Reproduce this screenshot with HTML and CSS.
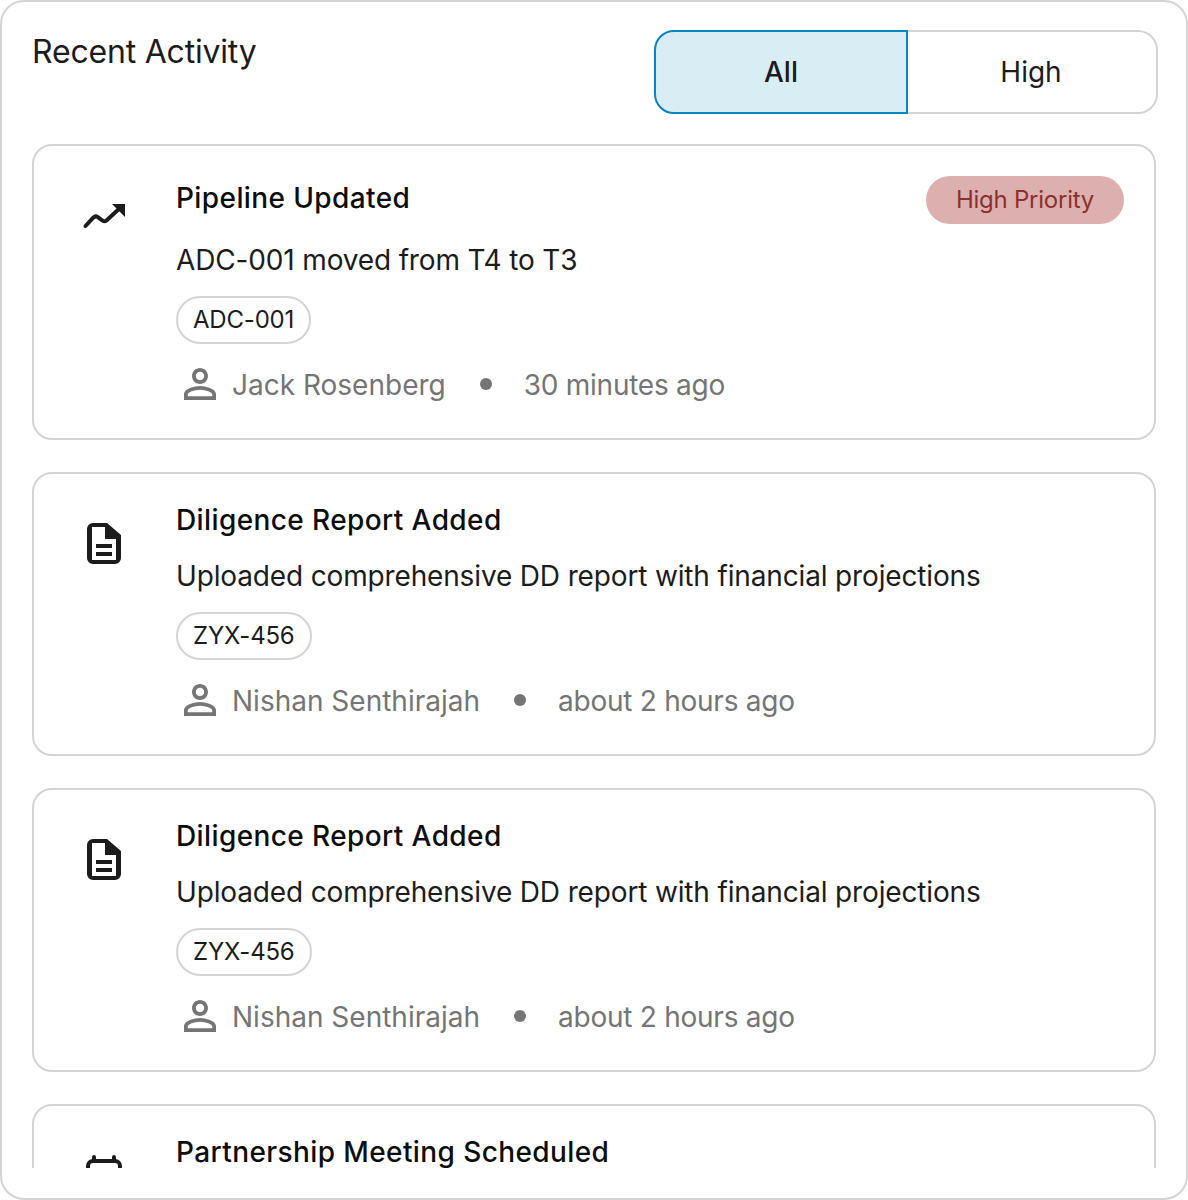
FILE: index.html
```html
<!DOCTYPE html>
<html lang="en">
<head>
  <meta charset="UTF-8">
  <title>Recent Activity</title>
  <link rel="stylesheet" href="styles.css">
</head>
<body>
  <section class="panel">
    <div class="panel-head">
      <h2 class="panel-title">Recent Activity</h2>
      <div class="toggle">
        <button class="toggle-btn active">All</button>
        <button class="toggle-btn">High</button>
      </div>
    </div>

    <div class="list">
      <article class="card">
        <div class="card-icon">
          <svg viewBox="0 0 48 48" width="48" height="48"><path class="line" d="M5.5 34 L13.5 25.5 Q15.5 23.5 17.5 25 L22.5 28.5 Q24.5 30 26.5 28.5 L40 16"/><path d="M32 12 H45 V25 Z"/></svg>
        </div>
        <div class="card-body">
          <div class="card-top">
            <h3 class="card-title">Pipeline Updated</h3>
            <span class="badge">High Priority</span>
          </div>
          <p class="card-desc">ADC-001 moved from T4 to T3</p>
          <span class="tag">ADC-001</span>
          <div class="meta">
            <svg viewBox="0 0 24 24" width="48" height="48"><path d="M12 5.9c1.16 0 2.1.94 2.1 2.1s-.94 2.1-2.1 2.1S9.9 9.16 9.9 8s.94-2.1 2.1-2.1m0 9c2.97 0 6.1 1.46 6.1 2.1v1.1H5.9V17c0-.64 3.13-2.1 6.1-2.1M12 4C9.79 4 8 5.79 8 8s1.79 4 4 4 4-1.79 4-4-1.79-4-4-4zm0 9c-2.67 0-8 1.34-8 4v3h16v-3c0-2.66-5.33-4-8-4z"/></svg>
            <span class="meta-name">Jack Rosenberg</span>
            <span class="meta-dot"></span>
            <span class="meta-time">30 minutes ago</span>
          </div>
        </div>
      </article>

      <article class="card">
        <div class="card-icon">
          <svg viewBox="0 0 48 48" width="48" height="48"><path fill-rule="evenodd" d="M13 3H27L41 15V38A6 6 0 0 1 35 44H13A6 6 0 0 1 7 38V9A6 6 0 0 1 13 3ZM12 7V40H36V19H25V7ZM16 24H32V28H16ZM16 32H32V36H16Z"/></svg>
        </div>
        <div class="card-body">
          <h3 class="card-title">Diligence Report Added</h3>
          <p class="card-desc">Uploaded comprehensive DD report with financial projections</p>
          <span class="tag">ZYX-456</span>
          <div class="meta">
            <svg viewBox="0 0 24 24" width="48" height="48"><path d="M12 5.9c1.16 0 2.1.94 2.1 2.1s-.94 2.1-2.1 2.1S9.9 9.16 9.9 8s.94-2.1 2.1-2.1m0 9c2.97 0 6.1 1.46 6.1 2.1v1.1H5.9V17c0-.64 3.13-2.1 6.1-2.1M12 4C9.79 4 8 5.79 8 8s1.79 4 4 4 4-1.79 4-4-1.79-4-4-4zm0 9c-2.67 0-8 1.34-8 4v3h16v-3c0-2.66-5.33-4-8-4z"/></svg>
            <span class="meta-name">Nishan Senthirajah</span>
            <span class="meta-dot"></span>
            <span class="meta-time">about 2 hours ago</span>
          </div>
        </div>
      </article>

      <article class="card">
        <div class="card-icon">
          <svg viewBox="0 0 48 48" width="48" height="48"><path fill-rule="evenodd" d="M13 3H27L41 15V38A6 6 0 0 1 35 44H13A6 6 0 0 1 7 38V9A6 6 0 0 1 13 3ZM12 7V40H36V19H25V7ZM16 24H32V28H16ZM16 32H32V36H16Z"/></svg>
        </div>
        <div class="card-body">
          <h3 class="card-title">Diligence Report Added</h3>
          <p class="card-desc">Uploaded comprehensive DD report with financial projections</p>
          <span class="tag">ZYX-456</span>
          <div class="meta">
            <svg viewBox="0 0 24 24" width="48" height="48"><path d="M12 5.9c1.16 0 2.1.94 2.1 2.1s-.94 2.1-2.1 2.1S9.9 9.16 9.9 8s.94-2.1 2.1-2.1m0 9c2.97 0 6.1 1.46 6.1 2.1v1.1H5.9V17c0-.64 3.13-2.1 6.1-2.1M12 4C9.79 4 8 5.79 8 8s1.79 4 4 4 4-1.79 4-4-1.79-4-4-4zm0 9c-2.67 0-8 1.34-8 4v3h16v-3c0-2.66-5.33-4-8-4z"/></svg>
            <span class="meta-name">Nishan Senthirajah</span>
            <span class="meta-dot"></span>
            <span class="meta-time">about 2 hours ago</span>
          </div>
        </div>
      </article>

      <article class="card">
        <div class="card-icon">
          <svg viewBox="0 0 48 48" width="48" height="48"><rect class="line" x="8" y="9" width="32" height="34" rx="5"/><path class="line" d="M14 5V9M34 5V9M8 20H40"/></svg>
        </div>
        <div class="card-body">
          <h3 class="card-title">Partnership Meeting Scheduled</h3>
        </div>
      </article>
    </div>
  </section>
</body>
</html>
```

FILE: styles.css
```css
* { box-sizing: border-box; }
body { margin: 0; font-family: Inter, "Liberation Sans", sans-serif; background: #fff; color: #1c1c1c; }

.panel { width: 1188px; height: 1200px; padding: 28px 30px 30px; border: 2px solid #d4d4d4; border-radius: 24px; background: #fff; display: flex; flex-direction: column; gap: 30px; }
.panel-head { display: flex; justify-content: space-between; align-items: flex-start; margin-right: -2px; }
.panel-title { margin: 0; font-size: 32px; line-height: 44px; font-weight: 400; letter-spacing: -0.2px; }

.toggle { display: flex; width: 504px; height: 84px; }
.toggle-btn { flex: 1; padding: 0 2px 0 0; font: 400 28px Inter, sans-serif; color: #1c1c1c; background: #fff; border: 2px solid #d4d4d4; border-left: 0; border-radius: 0 20px 20px 0; }
.toggle-btn.active { flex: none; width: 254px; padding: 0; font-weight: 500; background: #d9edf4; border: 2px solid #0a85bd; border-radius: 20px 0 0 20px; }

.list { flex: 1; min-height: 0; overflow: hidden; display: flex; flex-direction: column; gap: 32px; }
.card { flex: none; display: flex; gap: 32px; padding: 30px; border: 2px solid #d4d4d4; border-radius: 20px; }
.card-icon { flex: none; width: 80px; padding: 16px; }
.card-icon svg { display: block; fill: #1c1c1c; }
.card-icon .line { fill: none; stroke: #1c1c1c; stroke-width: 4; stroke-linecap: round; }
.card-body { flex: 1; display: flex; flex-direction: column; align-items: flex-start; gap: 16px; }
.card-top { width: 100%; display: flex; justify-content: space-between; align-items: center; }
.card-title { margin: 0; padding-bottom: 4px; font-size: 28px; line-height: 32px; font-weight: 500; letter-spacing: 0.4px; color: #0d0d0d; }
.card-desc { margin: 0; padding-top: 1px; font-size: 28px; line-height: 39px; letter-spacing: -0.15px; }

.badge { height: 48px; padding: 0 30px; border-radius: 24px; background: #dcb0ae; color: #8c2f2f; font-size: 24px; line-height: 48px; letter-spacing: -0.25px; }
.tag { height: 48px; padding: 0 15px; border: 2px solid #d4d4d4; border-radius: 24px; font-size: 24px; line-height: 44px; letter-spacing: -0.2px; }

.meta { display: flex; align-items: center; gap: 8px; height: 48px; font-size: 28px; color: #757575; }
.meta svg { display: block; fill: #757575; }
.meta-name, .meta-time { padding-top: 1px; }
.meta-time { letter-spacing: -0.25px; }
.meta-dot { width: 12px; height: 12px; margin: 0 24px 0 26px; border-radius: 50%; background: #757575; }
```
